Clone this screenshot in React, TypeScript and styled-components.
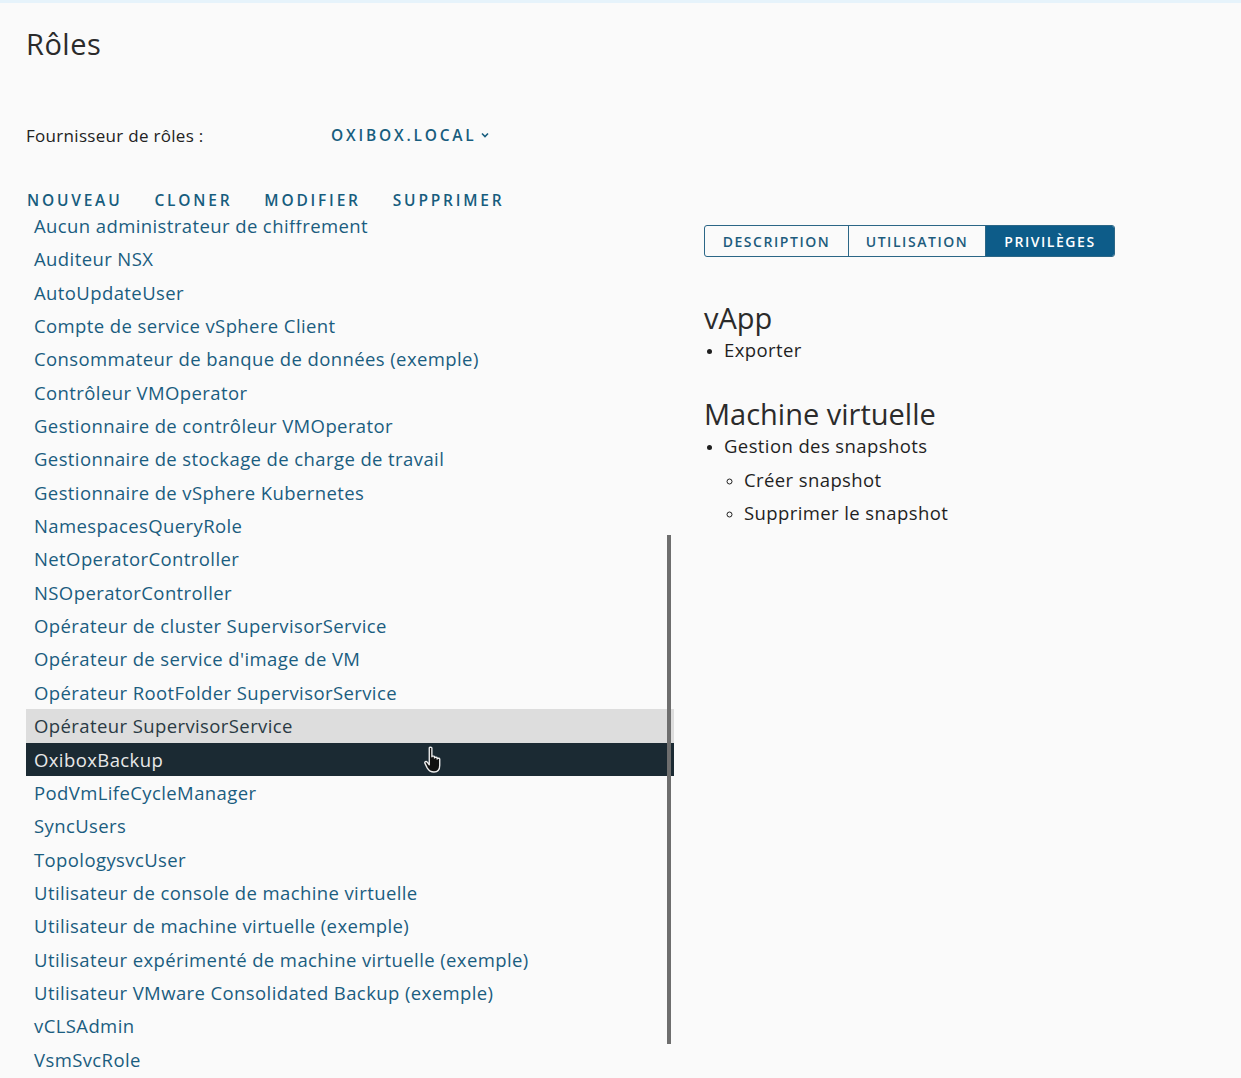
import { createGlobalStyle } from "styled-components";
import styled from "styled-components";

const GlobalStyle = createGlobalStyle`
  html, body {
    margin: 0;
    padding: 0;
    background: #fafafa;
  }
  body {
    font-family: "Open Sans", Lato, sans-serif;
    color: #1f1f1f;
    overflow: hidden;
  }
`;

const roles = [
  "Aucun administrateur de chiffrement",
  "Auditeur NSX",
  "AutoUpdateUser",
  "Compte de service vSphere Client",
  "Consommateur de banque de données (exemple)",
  "Contrôleur VMOperator",
  "Gestionnaire de contrôleur VMOperator",
  "Gestionnaire de stockage de charge de travail",
  "Gestionnaire de vSphere Kubernetes",
  "NamespacesQueryRole",
  "NetOperatorController",
  "NSOperatorController",
  "Opérateur de cluster SupervisorService",
  "Opérateur de service d'image de VM",
  "Opérateur RootFolder SupervisorService",
  "Opérateur SupervisorService",
  "OxiboxBackup",
  "PodVmLifeCycleManager",
  "SyncUsers",
  "TopologysvcUser",
  "Utilisateur de console de machine virtuelle",
  "Utilisateur de machine virtuelle (exemple)",
  "Utilisateur expérimenté de machine virtuelle (exemple)",
  "Utilisateur VMware Consolidated Backup (exemple)",
  "vCLSAdmin",
  "VsmSvcRole",
];

const HOVERED = "Opérateur SupervisorService";
const SELECTED = "OxiboxBackup";

type RowState = "idle" | "hover" | "selected";

export default function App() {
  return (
    <>
      <GlobalStyle />
      <Page>
        <Title>Rôles</Title>
        <ProviderRow>
          <ProviderLabel>Fournisseur de rôles :</ProviderLabel>
          <ProviderSelect>
            OXIBOX.LOCAL
            <svg width="10" height="10" viewBox="0 0 10 10">
              <path d="M2 3.5 L5 6.5 L8 3.5" fill="none" stroke="currentColor" strokeWidth="1.6" />
            </svg>
          </ProviderSelect>
        </ProviderRow>
        <Toolbar>
          <ActionButton>Nouveau</ActionButton>
          <ActionButton>Cloner</ActionButton>
          <ActionButton>Modifier</ActionButton>
          <ActionButton>Supprimer</ActionButton>
        </Toolbar>
        <Columns>
          <ListViewport>
            <RoleList>
              {roles.map((role) => {
                const state: RowState =
                  role === SELECTED ? "selected" : role === HOVERED ? "hover" : "idle";
                return (
                  <RoleRow key={role} $state={state}>
                    {role}
                    {state === "selected" && (
                      <Cursor width="23" height="30" viewBox="0 0 22 28">
                        <path
                          d="M6 2.5 C6 1.4 8.5 1.4 8.5 2.5 V11 C8.5 10 11 10 11 11 V12 C11 11 13.5 11 13.5 12 V13 C13.5 12 16 12 16 13 V19 C16 23 14 25.5 10.5 25.5 C7 25.5 5.5 24 4 21.5 L1.8 17 C1.2 15.8 3 14.8 4 16 L6 18.5 Z"
                          fill="#111"
                          stroke="#eee"
                          strokeWidth="1.3"
                          strokeLinejoin="round"
                        />
                      </Cursor>
                    )}
                  </RoleRow>
                );
              })}
            </RoleList>
            <ScrollThumb />
          </ListViewport>
          <DetailPanel>
            <TabGroup>
              <Tab $active={false} $width={143}>Description</Tab>
              <Tab $active={false} $width={137}>Utilisation</Tab>
              <Tab $active $width={129}>Privilèges</Tab>
            </TabGroup>
            <PrivilegeGroup>
              <GroupTitle>vApp</GroupTitle>
              <BulletList>
                <li>Exporter</li>
              </BulletList>
            </PrivilegeGroup>
            <PrivilegeGroup>
              <GroupTitle>Machine virtuelle</GroupTitle>
              <BulletList>
                <li>
                  Gestion des snapshots
                  <SubList>
                    <li>Créer snapshot</li>
                    <li>Supprimer le snapshot</li>
                  </SubList>
                </li>
              </BulletList>
            </PrivilegeGroup>
          </DetailPanel>
        </Columns>
      </Page>
    </>
  );
}

const Page = styled.div`
  height: 1078px;
  box-sizing: border-box;
  border-top: 3px solid #e6f3fb;
  padding-left: 26px;
  display: flex;
  flex-direction: column;
`;

const Title = styled.h1`
  margin: 22px 0 0;
  font-size: 29px;
  line-height: 38px;
  letter-spacing: 0.5px;
  font-weight: 400;
  color: #2b2b2b;
`;

const ProviderRow = styled.div`
  display: flex;
  align-items: center;
  margin-top: 60px;
  height: 24px;
`;

const ProviderLabel = styled.span`
  width: 305px;
  font-size: 17px;
  letter-spacing: 0.3px;
  color: #222;
`;

const ProviderSelect = styled.span`
  display: inline-flex;
  align-items: center;
  gap: 3px;
  font-size: 15.5px;
  font-weight: 600;
  letter-spacing: 0.18em;
  color: #175d7e;
`;

const Toolbar = styled.div`
  display: flex;
  gap: 31px;
  margin-top: 43px;
  height: 20px;
  align-items: center;
`;

const ActionButton = styled.button`
  border: none;
  background: none;
  padding: 0 0 0 1px;
  font-family: inherit;
  font-size: 15.5px;
  font-weight: 600;
  letter-spacing: 0.18em;
  text-transform: uppercase;
  color: #175d7e;
`;

const Columns = styled.div`
  display: flex;
  flex: 1;
  min-height: 0;
  margin-top: 10px;
  gap: 30px;
`;

const ListViewport = styled.div`
  position: relative;
  width: 648px;
  overflow: hidden;
`;

const RoleList = styled.ul`
  list-style: none;
  margin: -11px 0 0;
  padding: 0;
`;

const rowColors: Record<RowState, { bg: string; fg: string }> = {
  idle: { bg: "transparent", fg: "#1a5d80" },
  hover: { bg: "#dddddd", fg: "#2a3a44" },
  selected: { bg: "#1b2a33", fg: "#e8e8e8" },
};

const RoleRow = styled.li<{ $state: RowState }>`
  position: relative;
  height: 33.35px;
  line-height: 33.35px;
  padding-left: 8px;
  font-size: 18.5px;
  letter-spacing: 0.4px;
  white-space: nowrap;
  background: ${(p) => rowColors[p.$state].bg};
  color: ${(p) => rowColors[p.$state].fg};
`;

const Cursor = styled.svg`
  position: absolute;
  left: 397px;
  top: 2px;
`;

const ScrollThumb = styled.div`
  position: absolute;
  left: 641px;
  top: 315px;
  width: 4px;
  height: 509px;
  background: #6e6e6e;
`;

const DetailPanel = styled.div`
  padding-top: 5px;
`;

const TabGroup = styled.div`
  display: inline-flex;
  border: 1.5px solid #2b6686;
  border-radius: 3px;
  overflow: hidden;
  height: 32px;
  box-sizing: border-box;
`;

const Tab = styled.div<{ $active: boolean; $width: number }>`
  display: flex;
  align-items: center;
  justify-content: center;
  width: ${(p) => p.$width}px;
  box-sizing: border-box;
  font-size: 14px;
  font-weight: 600;
  letter-spacing: 0.11em;
  text-transform: uppercase;
  color: ${(p) => (p.$active ? "#fff" : "#1d5c7d")};
  background: ${(p) => (p.$active ? "#0d5c89" : "transparent")};
  & + & {
    border-left: 1.5px solid #2b6686;
  }
`;

const PrivilegeGroup = styled.section`
  margin-top: 44px;
  & + & {
    margin-top: 31px;
  }
`;

const GroupTitle = styled.h2`
  margin: 0;
  font-size: 29px;
  line-height: 34px;
  font-weight: 400;
  color: #2b2b2b;
`;

const BulletList = styled.ul`
  margin: -2px 0 0;
  padding-left: 20px;
  font-size: 18.5px;
  letter-spacing: 0.4px;
  line-height: 33.3px;
  color: #1f1f1f;
  li::marker {
    font-size: 14px;
  }
`;

const SubList = styled.ul`
  margin: 0;
  padding-left: 20px;
  list-style: circle;
`;
